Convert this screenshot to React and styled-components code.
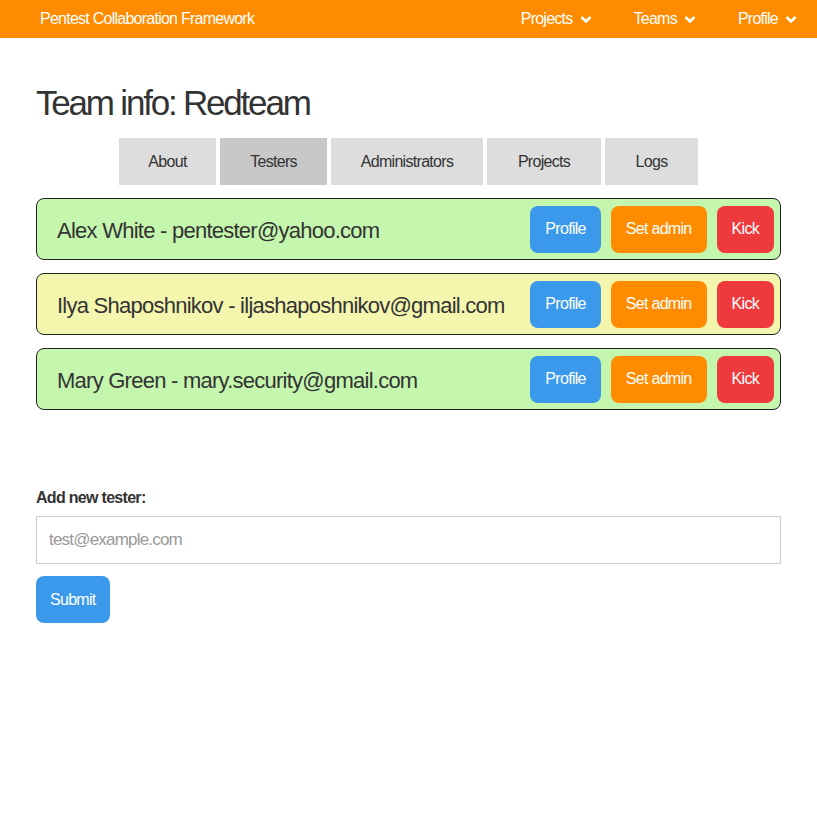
import styled, { createGlobalStyle } from 'styled-components'

const GlobalStyle = createGlobalStyle`
  body {
    margin: 0;
    background: #fff;
    font-family: "Liberation Sans", Arial, sans-serif;
    color: #333;
  }
`

const Navbar = styled.nav`
  height: 38px;
  background-color: #ff8c00;
  display: flex;
  align-items: center;
  justify-content: space-between;
  padding: 0 20px 0 40px;
  color: #fff;
  font-size: 16px;
  letter-spacing: -0.75px;
`

const NavMenu = styled.div`
  display: flex;
  gap: 42px;
`

const NavItem = styled.div`
  display: flex;
  align-items: center;
  gap: 7px;
`

const Chevron = () => (
  <svg width="12" height="9" viewBox="0 0 12 9">
    <path d="M1.5 2 L6 6.5 L10.5 2" fill="none" stroke="#fff" strokeWidth="2.6" />
  </svg>
)

const Content = styled.div`
  padding: 0 36px;
`

const Title = styled.h1`
  margin: 45px 0 15px;
  font-size: 35px;
  font-weight: normal;
  color: #333;
  line-height: 40px;
  letter-spacing: -2.2px;
`

const Tabs = styled.div`
  display: flex;
  justify-content: center;
  gap: 4px;
  margin-bottom: 13px;
`

const Tab = styled.div`
  height: 47px;
  width: ${props => props.width}px;
  background-color: ${props => (props.active ? '#c8c8c8' : '#dddddd')};
  display: flex;
  align-items: center;
  justify-content: center;
  font-size: 16px;
  color: #333;
  letter-spacing: -0.7px;
`

const List = styled.div`
  display: flex;
  flex-direction: column;
  gap: 13px;
`

const Row = styled.div`
  height: 60px;
  border: 1px solid #222;
  border-radius: 8px;
  background-color: ${props => (props.admin ? '#f4f6ae' : '#c5f6ae')};
  display: flex;
  align-items: center;
  padding: 0 6px 0 20px;
`

const RowText = styled.div`
  flex: 1;
  font-size: 22px;
  color: #333;
  white-space: nowrap;
  letter-spacing: -0.75px;
  padding-top: 3px;
`

const Actions = styled.div`
  display: flex;
  gap: 10px;
`

const Button = styled.button`
  height: 47px;
  padding: 0 15px;
  border: 0;
  border-radius: 8px;
  background-color: ${props => props.color};
  color: #fff;
  font-family: "Liberation Sans", Arial, sans-serif;
  font-size: 16px;
  letter-spacing: -0.7px;
  cursor: pointer;
`

const Form = styled.div`
  margin-top: 79px;
`

const Label = styled.div`
  font-size: 16px;
  font-weight: bold;
  color: #333;
  margin-bottom: 9px;
  letter-spacing: -0.7px;
`

const Input = styled.input`
  box-sizing: border-box;
  width: 100%;
  height: 48px;
  border: 1px solid #ccc;
  padding: 0 12px;
  font-family: "Liberation Sans", Arial, sans-serif;
  font-size: 17px;
  letter-spacing: -0.8px;
  outline: none;

  &::placeholder {
    color: #999;
  }
`

const Submit = styled(Button)`
  margin-top: 12px;
  padding: 0 14px;
`

const testers = [
  { name: 'Alex White - pentester@yahoo.com', admin: false },
  { name: 'Ilya Shaposhnikov - iljashaposhnikov@gmail.com', admin: true },
  { name: 'Mary Green - mary.security@gmail.com', admin: false },
]

const tabs = [
  { label: 'About', width: 97 },
  { label: 'Testers', width: 107, active: true },
  { label: 'Administrators', width: 152 },
  { label: 'Projects', width: 114 },
  { label: 'Logs', width: 93 },
]

function App () {
  return (
    <>
      <GlobalStyle />
      <Navbar>
        <div>Pentest Collaboration Framework</div>
        <NavMenu>
          <NavItem>Projects <Chevron /></NavItem>
          <NavItem>Teams <Chevron /></NavItem>
          <NavItem>Profile <Chevron /></NavItem>
        </NavMenu>
      </Navbar>
      <Content>
        <Title>Team info: Redteam</Title>
        <Tabs>
          {tabs.map(t => (
            <Tab key={t.label} width={t.width} active={t.active}>{t.label}</Tab>
          ))}
        </Tabs>
        <List>
          {testers.map(t => (
            <Row key={t.name} admin={t.admin}>
              <RowText>{t.name}</RowText>
              <Actions>
                <Button color="#3b99ec">Profile</Button>
                <Button color="#ff8c00">Set admin</Button>
                <Button color="#ee3a3d">Kick</Button>
              </Actions>
            </Row>
          ))}
        </List>
        <Form>
          <Label>Add new tester:</Label>
          <Input placeholder="test@example.com" />
          <Submit color="#3b99ec">Submit</Submit>
        </Form>
      </Content>
    </>
  )
}

export default App
